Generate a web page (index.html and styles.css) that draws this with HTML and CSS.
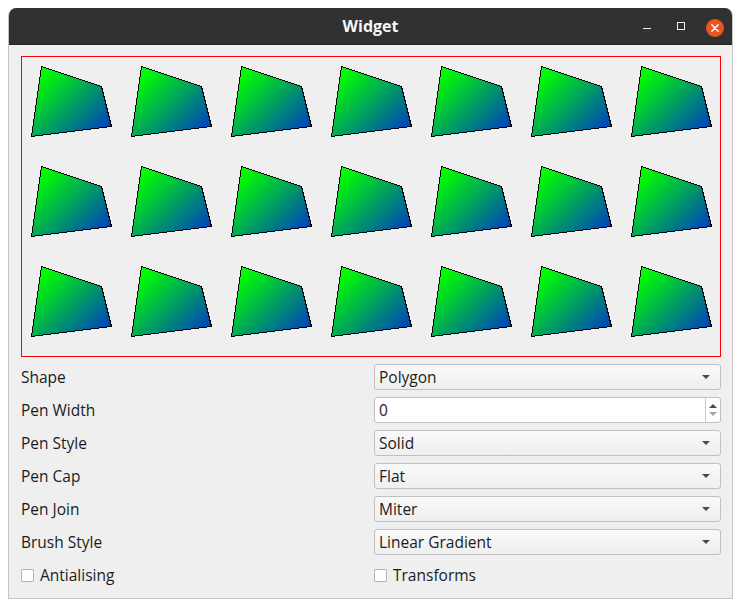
FILE: index.html
```html
<!DOCTYPE html>
<html>
<head>
<meta charset="utf-8">
<link rel="stylesheet" href="styles.css">
</head>
<body>
<div class="window">
  <div class="titlebar">
    <span class="title">Widget</span>
    <div class="controls">
      <span class="btn-min"></span>
      <span class="btn-max"></span>
      <span class="btn-close">
        <svg width="18" height="18" viewBox="0 0 18 18"><path d="M5.8 5.8 L12.2 12.2 M12.2 5.8 L5.8 12.2" stroke="#fff" stroke-width="1.5" stroke-linecap="round"/></svg>
      </span>
    </div>
  </div>
  <div class="content">
    <div class="render">
      <svg width="698" height="299" viewBox="1 1 698 299" class="canvas">
        <defs>
          <linearGradient id="g" gradientUnits="userSpaceOnUse" x1="0" y1="0" x2="100" y2="100">
            <stop offset="0.2" stop-color="#00ff00"/>
            <stop offset="1" stop-color="#0000ff"/>
          </linearGradient>
          <pattern id="p" width="100" height="100" patternUnits="userSpaceOnUse">
            <polygon points="10.5,80.5 20.5,10.5 80.5,30.5 90.5,70.5" fill="url(#g)" stroke="#000" stroke-width="1" shape-rendering="crispEdges"/>
          </pattern>
        </defs>
        <rect x="0" y="0" width="700" height="300" fill="url(#p)"/>
      </svg>
    </div>
    <div class="form">
      <div class="label">Shape</div>
      <div class="combo"><span>Polygon</span><span class="arrow"></span></div>
      <div class="label">Pen Width</div>
      <div class="spin"><span class="val">0</span><span class="spin-btns"><span class="up"></span><span class="down"></span></span></div>
      <div class="label">Pen Style</div>
      <div class="combo"><span>Solid</span><span class="arrow"></span></div>
      <div class="label">Pen Cap</div>
      <div class="combo"><span>Flat</span><span class="arrow"></span></div>
      <div class="label">Pen Join</div>
      <div class="combo"><span>Miter</span><span class="arrow"></span></div>
      <div class="label">Brush Style</div>
      <div class="combo"><span>Linear Gradient</span><span class="arrow"></span></div>
      <div class="check"><span class="box"></span><span>Antialising</span></div>
      <div class="check"><span class="box"></span><span>Transforms</span></div>
    </div>
  </div>
</div>
</body>
</html>
```
FILE: styles.css
```css
* { box-sizing: border-box; }
html, body { margin: 0; padding: 0; background: #ffffff; }
body { font-family: "Open Sans", "DejaVu Sans", sans-serif; font-size: 15.5px; color: #1c1c1c; }

.window {
  margin: 8px 0 0 8px;
  width: 725px;
  height: 591px;
  background: #efefef;
  border: 1px solid #c4c4c4;
  border-top: none;
  border-radius: 8px 8px 0 0;
  overflow: hidden;
  display: flex;
  flex-direction: column;
}

.titlebar {
  height: 37px;
  flex: none;
  background: #313131;
  position: relative;
  display: flex;
  align-items: center;
  justify-content: center;
  border-bottom: 1px solid #262626;
}
.title { color: #f6f6f6; font-weight: bold; font-size: 16px; }
.controls {
  position: absolute;
  right: 8px;
  top: 11px;
  display: flex;
  align-items: flex-start;
}
.btn-min { width: 8px; height: 1px; background: #f0f0f0; margin-top: 9px; margin-right: 26px; }
.btn-max { width: 8px; height: 8px; border: 1px solid #f0f0f0; margin-top: 3px; margin-right: 21px; }
.btn-close { width: 18px; height: 18px; border-radius: 50%; background: #e95420; display: block; }
.btn-close svg { display: block; }

.content { padding: 11px 11px 0 12px; }
.render { height: 301px; width: 700px; border: 1px solid #ff0000; }
.canvas { display: block; }

.form {
  margin-top: 7px;
  display: grid;
  grid-template-columns: 353px 347px;
  grid-auto-rows: 26px;
  row-gap: 7px;
}
.label { display: flex; align-items: center; }
.combo {
  display: flex;
  align-items: center;
  justify-content: space-between;
  border: 1px solid #c0c0c0;
  border-radius: 3px;
  background: linear-gradient(#f9f9f9, #efefef);
  padding: 0 10px 0 4px;
}
.arrow { width: 0; height: 0; border-left: 4px solid transparent; border-right: 4px solid transparent; border-top: 4px solid #4a4a4a; }
.spin {
  display: flex;
  align-items: stretch;
  border: 1px solid #c0c0c0;
  border-radius: 3px;
  background: #fff;
}
.val { flex: 1; display: flex; align-items: center; padding-left: 4px; }
.spin-btns { width: 15px; border-left: 1px solid #c8c8c8; display: flex; flex-direction: column; align-items: center; justify-content: center; gap: 4px; }
.up { width: 0; height: 0; border-left: 4px solid transparent; border-right: 4px solid transparent; border-bottom: 4px solid #4a4a4a; }
.down { width: 0; height: 0; border-left: 4px solid transparent; border-right: 4px solid transparent; border-top: 4px solid #a8a8a8; }
.check { display: flex; align-items: center; gap: 6px; }
.box { width: 13px; height: 13px; border: 1px solid #b4b4b4; background: #fff; border-radius: 1px; }
```
